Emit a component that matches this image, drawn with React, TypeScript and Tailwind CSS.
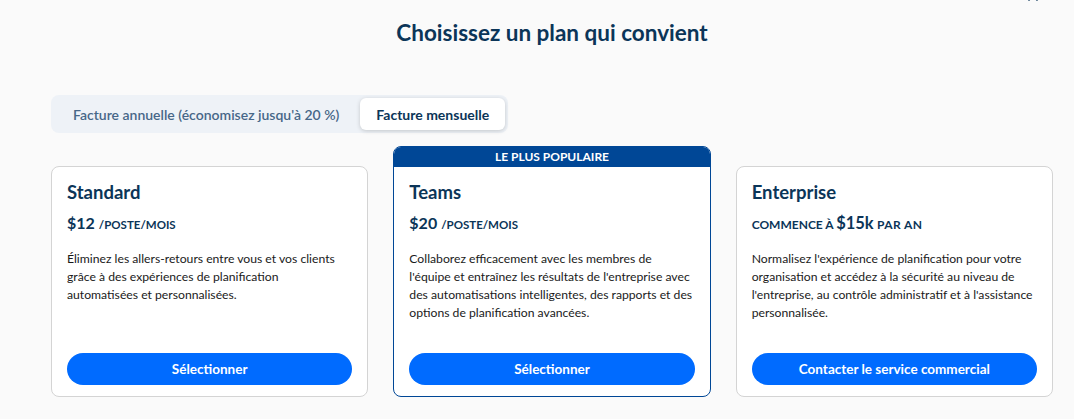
import { X } from 'lucide-react'

const plans = [
  {
    name: 'Standard',
    price: (
      <>
        <span className="text-[16px] font-bold">$12</span>
        <span className="ml-1 text-[11.5px] font-bold">/POSTE/MOIS</span>
      </>
    ),
    desc: 'Éliminez les allers-retours entre vous et vos clients grâce à des expériences de planification automatisées et personnalisées.',
    cta: 'Sélectionner',
    popular: false,
  },
  {
    name: 'Teams',
    price: (
      <>
        <span className="text-[16px] font-bold">$20</span>
        <span className="ml-1 text-[11.5px] font-bold">/POSTE/MOIS</span>
      </>
    ),
    desc: "Collaborez efficacement avec les membres de l'équipe et entraînez les résultats de l'entreprise avec des automatisations intelligentes, des rapports et des options de planification avancées.",
    cta: 'Sélectionner',
    popular: true,
  },
  {
    name: 'Enterprise',
    price: (
      <>
        <span className="text-[12px] font-bold">COMMENCE À </span>
        <span className="text-[16.5px] font-bold">$15k</span>
        <span className="text-[12px] font-bold tracking-[0.4px]"> PAR AN</span>
      </>
    ),
    desc: "Normalisez l'expérience de planification pour votre organisation et accédez à la sécurité au niveau de l'entreprise, au contrôle administratif et à l'assistance personnalisée.",
    cta: 'Contacter le service commercial',
    popular: false,
  },
]

export default function App() {
  return (
    <div
      className="relative h-[419px] w-full overflow-hidden bg-[#fafafa] text-[#0b3558]"
      style={{ fontFamily: 'Lato, "Noto Sans", sans-serif' }}
    >
      <X className="absolute right-[33px] top-[-12px] h-4 w-4 text-[#0b3558]" strokeWidth={2.5} />

      <div className="ml-[51px] w-[1002px] pt-[19px]">
        <h1 className="text-center text-[22.5px] font-bold leading-[28px]">Choisissez un plan qui convient</h1>

        {/* billing toggle */}
        <div className="mt-[48px] flex w-fit gap-[2px] rounded-lg bg-[#eef2f7] p-[3px]">
          <button className="h-[32px] px-[19px] text-[14px] font-semibold text-[#476788]">
            Facture annuelle (économisez jusqu'à 20 %)
          </button>
          <button className="h-[32px] rounded-md bg-white px-4 text-[14px] font-bold shadow-[0_1px_4px_rgba(0,0,0,0.18)]">
            Facture mensuelle
          </button>
        </div>

        <div className="mt-[13px] grid grid-cols-3 gap-[25px]">
          {plans.map(p => (
            <div
              key={p.name}
              className={
                p.popular
                  ? 'flex h-[251px] flex-col overflow-hidden rounded-lg border border-[#004796] bg-white'
                  : 'mt-[20px] flex h-[231px] flex-col rounded-lg border border-[#d4d4d4] bg-white'
              }
            >
              {p.popular && (
                <div className="flex h-[20px] items-center justify-center bg-[#004796] text-[12px] font-bold text-white">
                  LE PLUS POPULAIRE
                </div>
              )}
              <div className="flex flex-1 flex-col px-[15px] pb-[11px] pt-[13px]">
                <h2 className="text-[18.5px] font-bold leading-[24px]">{p.name}</h2>
                <div className="mt-[8px] leading-[22px]">{p.price}</div>
                <p className="mt-[14px] flex-1 text-[12.2px] leading-[18px] text-[#1a1a1a]">{p.desc}</p>
                <button className="h-[32px] w-full rounded-full bg-[#006bff] text-[13.5px] font-bold text-white">
                  {p.cta}
                </button>
              </div>
            </div>
          ))}
        </div>
      </div>
    </div>
  )
}
